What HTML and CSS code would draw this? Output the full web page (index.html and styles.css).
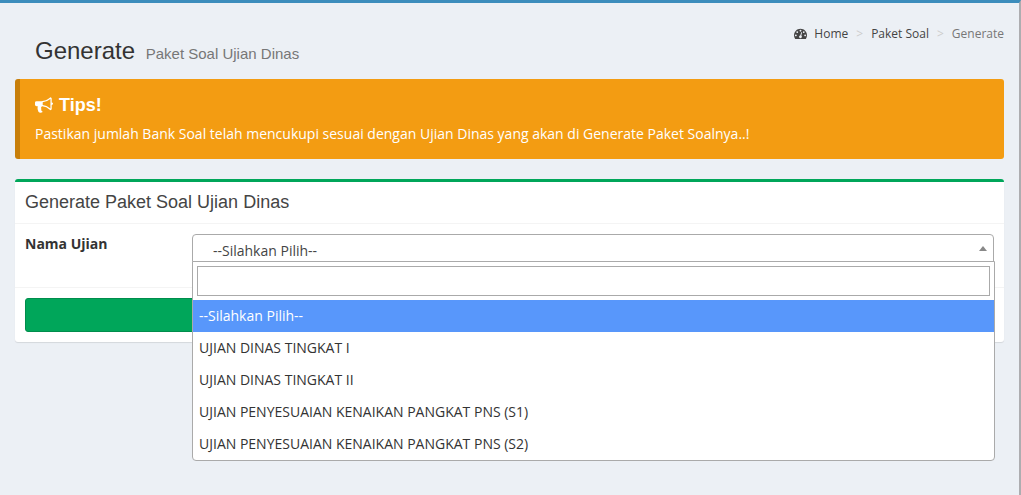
FILE: index.html
```html
<!DOCTYPE html>
<html lang="id">
<head>
<meta charset="utf-8">
<meta name="viewport" content="width=device-width, initial-scale=1">
<title>Generate Paket Soal Ujian Dinas</title>
<link rel="stylesheet" href="styles.css">
</head>
<body>
<main class="content-wrapper">
  <header class="content-header">
    <h1 class="page-title">Generate <small class="page-subtitle">Paket Soal Ujian Dinas</small></h1>
    <nav aria-label="Breadcrumb">
      <ol class="breadcrumb">
        <li><a href="#"><svg class="icon-dashboard" viewBox="0 0 1792 1792" aria-hidden="true"><path d="M384 1152q0-53-37.500-90.500t-90.500-37.500-90.500 37.500-37.500 90.500 37.500 90.500 90.500 37.500 90.500-37.500 37.500-90.500zm192-448q0-53-37.500-90.500t-90.500-37.500-90.500 37.500-37.500 90.500 37.500 90.500 90.500 37.500 90.500-37.500 37.500-90.500zm428 481l101-382q6-26-7.500-48.500t-38.500-29.500-48 6.500-30 39.500l-101 382q-60 5-107 43.500t-63 98.500q-20 77 20 146t117 89 146-20 89-117q16-60-6-117t-72-91zm660-33q0-53-37.500-90.500t-90.500-37.500-90.500 37.500-37.500 90.500 37.500 90.500 90.500 37.500 90.500-37.500 37.500-90.500zm-640-640q0-53-37.500-90.500t-90.500-37.500-90.500 37.500-37.500 90.500 37.500 90.500 90.500 37.500 90.500-37.500 37.500-90.500zm448 192q0-53-37.500-90.500t-90.500-37.500-90.500 37.500-37.500 90.500 37.500 90.500 90.500 37.500 90.500-37.500 37.500-90.500zm320 448q0 261-141 483-19 29-54 29h-1402q-35 0-54-29-141-221-141-483 0-182 71-348t191-286 286-191 348-71 348 71 286 191 191 286 71 348z"/></svg>Home</a></li>
        <li><a href="#">Paket Soal</a></li>
        <li class="current" aria-current="page">Generate</li>
      </ol>
    </nav>
  </header>

  <section class="callout">
    <h2 class="callout-title"><svg class="icon-bullhorn" viewBox="0 0 1792 1792" aria-hidden="true"><path d="M1664 640q53 0 90.500 37.500t37.500 90.500-37.500 90.500-90.500 37.500v384q0 52-38 90t-90 38q-417-347-812-380-58 19-91 66t-31 100.500 40 92.500q-20 33-23 65.500t6 58 33.500 55 48 50 61.500 50.500q-29 58-111.500 83t-168.500 11.500-132-55.500q-7-23-29.500-87.500t-32-94.500-23-89-15-101 3.500-98.500 22-110.500h-122q-66 0-113-47t-47-113v-192q0-66 47-113t113-47h480q435 0 896-384 52 0 90 38t38 90v384zm-128 604v-954q-394 302-768 343v270q377 42 768 341z"/></svg>Tips!</h2>
    <p class="callout-text">Pastikan jumlah Bank Soal telah mencukupi sesuai dengan Ujian Dinas yang akan di Generate Paket Soalnya..!</p>
  </section>

  <form class="box">
    <h2 class="box-header">Generate Paket Soal Ujian Dinas</h2>
    <div class="box-body">
      <label class="field-label" for="ujian">Nama Ujian</label>
      <div class="picker">
        <select class="picker-select" id="ujian">
          <option>--Silahkan Pilih--</option>
        </select>
        <div class="dropdown">
          <div class="search">
            <input class="search-input" type="text" aria-label="Cari ujian">
          </div>
          <ul class="options" role="listbox" aria-label="Nama Ujian">
            <li class="option active" role="option" aria-selected="true">--Silahkan Pilih--</li>
            <li class="option" role="option" aria-selected="false">UJIAN DINAS TINGKAT I</li>
            <li class="option" role="option" aria-selected="false">UJIAN DINAS TINGKAT II</li>
            <li class="option" role="option" aria-selected="false">UJIAN PENYESUAIAN KENAIKAN PANGKAT PNS (S1)</li>
            <li class="option" role="option" aria-selected="false">UJIAN PENYESUAIAN KENAIKAN PANGKAT PNS (S2)</li>
          </ul>
        </div>
      </div>
    </div>
    <div class="box-footer">
      <button class="submit" type="button" aria-label="Generate"></button>
    </div>
  </form>
</main>
</body>
</html>
```

FILE: styles.css
```css
* { box-sizing: border-box; }

body {
  margin: 0;
  background: #ecf0f5;
  color: #333;
  font: 14px/20px "Open Sans", "Noto Sans", sans-serif;
}

h1, h2, p, ul, ol { margin: 0; padding: 0; }
ul, ol { list-style: none; }

.content-wrapper {
  min-height: 100vh;
  padding: 0 15px;
  border-top: 3px solid #3c8dbc;
  border-right: 2px solid #adadb0;
}

.content-header {
  display: flex;
  justify-content: space-between;
  align-items: flex-start;
  padding: 21px 0 7px 20px;
}

.page-title {
  padding-top: 9px;
  font: 400 24px/36px "Liberation Sans", Arial, sans-serif;
}

.page-subtitle {
  padding-left: 4px;
  color: #777;
  font-size: 15px;
}

.breadcrumb {
  display: flex;
  font-size: 12px;
}

.breadcrumb a { color: #444; text-decoration: none; }
.breadcrumb .current { color: #777; }

.breadcrumb li + li::before {
  content: ">";
  padding: 0 8px;
  color: #ccc;
}

.icon-dashboard {
  width: 13px;
  height: 13px;
  margin-right: 7px;
  vertical-align: -2px;
  fill: #444;
}

.callout {
  margin-bottom: 20px;
  padding: 16px 30px 15px 15px;
  border-left: 5px solid #c87f0a;
  border-radius: 3px;
  background: #f39c12;
  color: #fff;
}

.callout-title {
  margin-bottom: 8px;
  font: 700 18px/20px "Liberation Sans", Arial, sans-serif;
}

.icon-bullhorn {
  width: 18px;
  height: 18px;
  margin-right: 6px;
  vertical-align: -3px;
  fill: #fff;
}

.callout-text { line-height: 21px; }

.box {
  border-top: 3px solid #00a65a;
  border-radius: 3px;
  background: #fff;
  box-shadow: 0 1px 1px rgba(0, 0, 0, 0.1);
}

.box-header {
  padding: 10px;
  border-bottom: 1px solid #f4f4f4;
  color: #444;
  font: 400 18px/21px "Liberation Sans", Arial, sans-serif;
}

.box-body {
  display: flex;
  min-height: 63px;
  padding: 10px;
}

.field-label {
  flex: 0 0 167px;
  font-weight: 700;
}

.picker {
  position: relative;
  flex: 1;
}

.picker-select {
  display: block;
  width: 100%;
  height: 28px;
  padding: 6px 20px 0;
  border: 1px solid #aaa;
  border-radius: 4px 4px 0 0;
  outline: 0;
  appearance: none;
  background: #fff;
  color: #444;
  font: inherit;
}

.picker::after {
  content: "";
  position: absolute;
  top: 12px;
  right: 7px;
  border: solid transparent;
  border-width: 0 4px 5px;
  border-bottom-color: #888;
}

.dropdown {
  position: absolute;
  z-index: 1;
  top: 27px;
  right: -1px;
  left: 0;
  border: 1px solid #aaa;
  border-radius: 0 0 4px 4px;
  background: #fff;
}

.search { padding: 4px; }

.search-input {
  display: block;
  width: 100%;
  height: 30px;
  padding: 4px;
  border: 1px solid #aaa;
  outline: 0;
  font: inherit;
}

.option { padding: 6px; }

.option.active {
  background: #5897fb;
  color: #fff;
}

.box-footer {
  padding: 10px;
  border-top: 1px solid #f4f4f4;
}

.submit {
  display: block;
  width: 100%;
  height: 34px;
  border: 1px solid #008d4c;
  border-radius: 3px;
  background: #00a65a;
}
```
